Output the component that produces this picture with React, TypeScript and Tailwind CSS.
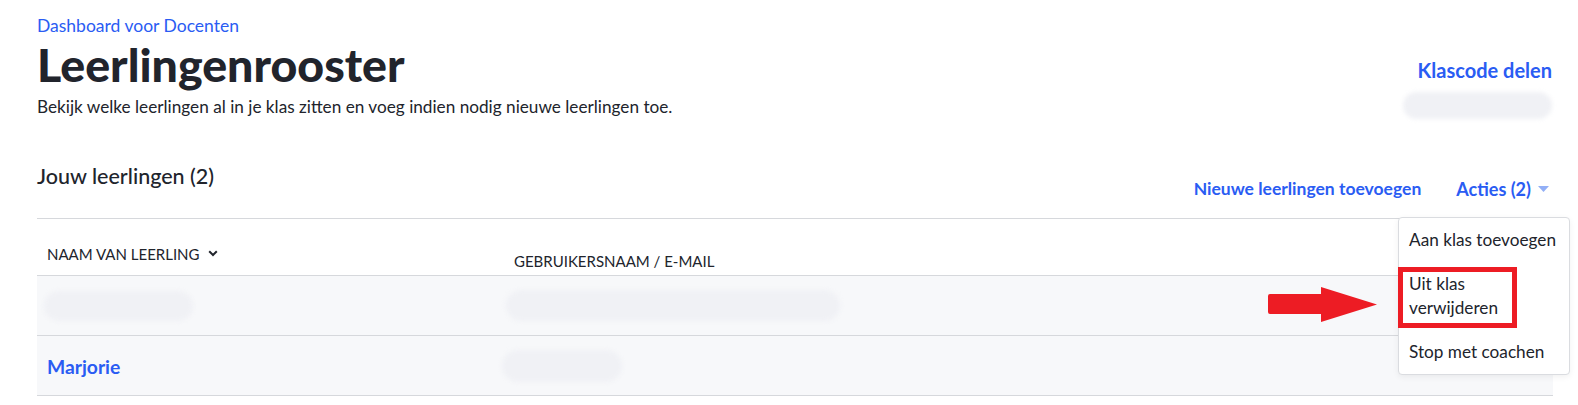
import React from 'react'

const blue = 'text-[#2a5cf3]'

function Pill({ className }: { className: string }) {
  return <div className={`rounded-full bg-[#f0f1f5] blur-[2px] ${className}`} />
}

export default function App() {
  return (
    <div className="min-h-[405px] bg-white pl-[37px] pr-[25px] text-[#21242c]" style={{ fontFamily: 'Lato, "Noto Sans", sans-serif' }}>
      {/* page header */}
      <div className="flex items-start justify-between">
        <div className="pt-[16px]">
          <a className={`block text-[17.5px] leading-[20px] ${blue}`}>Dashboard voor Docenten</a>
          <h1 className="text-[46.5px] font-black leading-[56px]">Leerlingenrooster</h1>
          <p className="mt-[3px] text-[17.2px] leading-[24px]">
            Bekijk welke leerlingen al in je klas zitten en voeg indien nodig nieuwe leerlingen toe.
          </p>
        </div>
        <div className="flex flex-col items-end pr-[1px] pt-[58px]">
          <a className={`text-[20px] font-bold leading-[24px] ${blue}`}>Klascode delen</a>
          <Pill className="mt-[10px] h-[27px] w-[149px]" />
        </div>
      </div>

      {/* section header */}
      <div className="mt-[45px] flex h-[54px] items-start justify-between pr-[4px]">
        <h2 className="text-[21.5px] font-medium leading-[24px]">Jouw leerlingen (2)</h2>
        <div className="mt-[13px] flex items-center gap-[35px]">
          <a className={`text-[17.5px] font-bold leading-[24px] ${blue}`}>Nieuwe leerlingen toevoegen</a>
          <div className="relative">
            <button className={`flex items-center gap-[7px] text-[18px] font-bold leading-[24px] ${blue}`}>
              Acties (2)
              <svg width="11" height="6" viewBox="0 0 11 6">
                <path d="M0 0h11L5.5 6z" fill="#92aff6" />
              </svg>
            </button>

            {/* dropdown menu */}
            <div className="absolute right-[-21px] top-[40px] z-10 w-[172px] rounded-[4px] border border-[#dadce0] bg-white text-[17.2px] leading-[24px] shadow-[0_2px_6px_rgba(0,0,0,0.06)]">
              <div className="px-[10px] py-[10px]">Aan klas toevoegen</div>
              <div className="relative px-[10px] py-[10px]">
                Uit klas
                <br />
                verwijderen
                <div className="pointer-events-none absolute left-[-1px] top-[5px] h-[61px] w-[119px] border-[5px] border-[#ed1c24]" />
              </div>
              <div className="px-[10px] py-[10px]">Stop met coachen</div>

              {/* red arrow */}
              <svg className="absolute left-[-131px] top-[69px]" width="110" height="36" viewBox="0 0 110 36">
                <path d="M2 7h51V0l56 17.5L53 35v-8H2q-2 0-2-2V9q0-2 2-2z" fill="#ed1c24" />
              </svg>
            </div>
          </div>
        </div>
      </div>

      {/* table */}
      <div className="w-[1516px] border-t border-[#d6d8dc]">
        <div className="grid h-[57px] grid-cols-[465px_1fr] border-b border-[#d6d8dc] text-[#21242c]">
          <div className="flex items-start gap-[8px] px-[10px] pt-[26px] text-[15px] leading-[18px]">
            NAAM VAN LEERLING
            <svg className="mt-[5px]" width="10" height="7" viewBox="0 0 10 7">
              <path d="M1.2 1.2L5 5l3.8-3.8" fill="none" stroke="#21242c" strokeWidth="2" />
            </svg>
          </div>
          <div className="px-[10px] pl-[12px] pt-[33px] text-[15px] leading-[18px]">GEBRUIKERSNAAM / E-MAIL</div>
        </div>

        <div className="grid h-[60px] grid-cols-[465px_1fr] items-center border-b border-[#d6d8dc] bg-[#f7f8fa]">
          <div className="px-[10px]">
            <Pill className="ml-[-3px] h-[30px] w-[149px]" />
          </div>
          <div className="px-[10px]">
            <Pill className="ml-[-6px] h-[31px] w-[334px]" />
          </div>
        </div>

        <div className="grid h-[60px] grid-cols-[465px_1fr] items-center border-b border-[#d6d8dc] bg-[#f7f8fa]">
          <div className="px-[10px] pt-[4px]">
            <a className={`text-[19.3px] font-bold ${blue}`}>Marjorie</a>
          </div>
          <div className="px-[10px]">
            <Pill className="ml-[-10px] h-[32px] w-[120px]" />
          </div>
        </div>
      </div>
    </div>
  )
}
